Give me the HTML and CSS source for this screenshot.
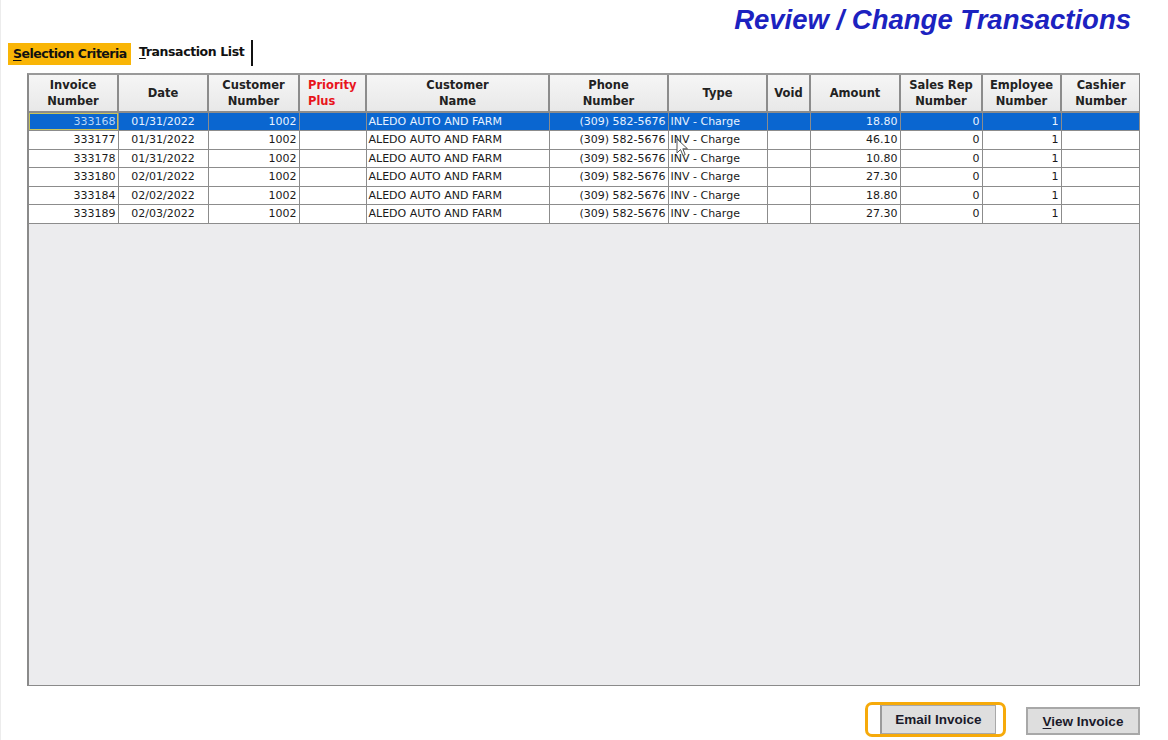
FILE: index.html
```html
<!DOCTYPE html>
<html>
<head>
<meta charset="utf-8">
<link rel="stylesheet" href="styles.css">
</head>
<body>
<div class="app">
  <div class="title-row"><h1 class="title">Review / Change Transactions</h1></div>
  <div class="tabs">
    <div class="tab tab-active"><u>S</u>election Criteria</div>
    <div class="tab tab-plain"><u>T</u>ransaction List</div>
  </div>
  <div class="grid">
    <table class="tbl">
      <colgroup>
        <col style="width:89px"><col style="width:90px"><col style="width:91px"><col style="width:67px">
        <col style="width:183px"><col style="width:119px"><col style="width:99px"><col style="width:43px">
        <col style="width:90px"><col style="width:82px"><col style="width:79px"><col style="width:80px">
      </colgroup>
      <thead>
        <tr>
          <th>Invoice<br>Number</th>
          <th>Date</th>
          <th>Customer<br>Number</th>
          <th class="th-red">Priority<br>Plus</th>
          <th>Customer<br>Name</th>
          <th>Phone<br>Number</th>
          <th>Type</th>
          <th>Void</th>
          <th>Amount</th>
          <th>Sales Rep<br>Number</th>
          <th>Employee<br>Number</th>
          <th>Cashier<br>Number</th>
        </tr>
      </thead>
      <tbody>
        <tr class="sel">
          <td class="r focus">333168</td><td class="c">01/31/2022</td><td class="r">1002</td><td></td>
          <td class="l">ALEDO AUTO AND FARM</td><td class="r">(309) 582-5676</td><td class="l">INV - Charge</td><td></td>
          <td class="r">18.80</td><td class="r">0</td><td class="r">1</td><td></td>
        </tr>
        <tr>
          <td class="r">333177</td><td class="c">01/31/2022</td><td class="r">1002</td><td></td>
          <td class="l">ALEDO AUTO AND FARM</td><td class="r">(309) 582-5676</td><td class="l">INV - Charge</td><td></td>
          <td class="r">46.10</td><td class="r">0</td><td class="r">1</td><td></td>
        </tr>
        <tr>
          <td class="r">333178</td><td class="c">01/31/2022</td><td class="r">1002</td><td></td>
          <td class="l">ALEDO AUTO AND FARM</td><td class="r">(309) 582-5676</td><td class="l">INV - Charge</td><td></td>
          <td class="r">10.80</td><td class="r">0</td><td class="r">1</td><td></td>
        </tr>
        <tr>
          <td class="r">333180</td><td class="c">02/01/2022</td><td class="r">1002</td><td></td>
          <td class="l">ALEDO AUTO AND FARM</td><td class="r">(309) 582-5676</td><td class="l">INV - Charge</td><td></td>
          <td class="r">27.30</td><td class="r">0</td><td class="r">1</td><td></td>
        </tr>
        <tr>
          <td class="r">333184</td><td class="c">02/02/2022</td><td class="r">1002</td><td></td>
          <td class="l">ALEDO AUTO AND FARM</td><td class="r">(309) 582-5676</td><td class="l">INV - Charge</td><td></td>
          <td class="r">18.80</td><td class="r">0</td><td class="r">1</td><td></td>
        </tr>
        <tr>
          <td class="r">333189</td><td class="c">02/03/2022</td><td class="r">1002</td><td></td>
          <td class="l">ALEDO AUTO AND FARM</td><td class="r">(309) 582-5676</td><td class="l">INV - Charge</td><td></td>
          <td class="r">27.30</td><td class="r">0</td><td class="r">1</td><td></td>
        </tr>
      </tbody>
    </table>
    <svg class="cursor" width="14" height="20" viewBox="0 0 14 20">
      <path d="M1 1 L1 15 L4.5 11.5 L7 17.5 L9.2 16.6 L6.8 10.8 L11.5 10.8 Z" fill="#fff" stroke="#555" stroke-width="1"/>
    </svg>
  </div>
  <div class="actions">
    <div class="focus-ring"><button class="btn">Email Invoice</button></div>
    <button class="btn btn-view"><u>V</u>iew Invoice</button>
  </div>
</div>
</body>
</html>
```

FILE: styles.css
```css
* { box-sizing: border-box; }
html, body { margin: 0; padding: 0; background: #fff; }
body { width: 1168px; height: 740px; overflow: hidden; font-family: "DejaVu Sans", sans-serif; }

.app {
  position: relative;
  width: 1168px;
  height: 740px;
  border-left: 1px solid #ececec;
  display: flex;
  flex-direction: column;
}

.title-row {
  height: 40px;
  display: flex;
  justify-content: flex-end;
  padding-right: 37px;
}
.title {
  margin: 0;
  padding-top: 4px;
  font-family: "Liberation Sans", Arial, sans-serif;
  font-weight: bold;
  font-style: italic;
  font-size: 27.5px;
  line-height: 32px;
  color: #1c22c0;
}

.tabs {
  height: 33px;
  display: flex;
  align-items: flex-start;
  padding-left: 7px;
}
.tab {
  font-weight: bold;
  font-size: 12.5px;
  color: #111;
  height: 22px;
  line-height: 22px;
  margin-top: 3px;
}
.tab u { text-decoration-thickness: 1px; text-underline-offset: 2px; }
.tab-active {
  background: #f9b506;
  width: 123px;
  padding-left: 5px;
  letter-spacing: -0.5px;
}
.tab-plain {
  margin-top: 0;
  height: 26px;
  line-height: 24px;
  padding-left: 8px;
  padding-right: 7px;
  border-right: 2px solid #111;
  letter-spacing: -0.4px;
}

.grid {
  position: relative;
  margin-left: 26px;
  width: 1113px;
  height: 613px;
  background: #ececee;
  border: 1px solid #8a8a8a;
  border-left: 2px solid #8a8a8a;
  border-top: 2px solid #9a9a9a;
  overflow: hidden;
}

.tbl {
  border-collapse: collapse;
  table-layout: fixed;
  width: 1112px;
  font-size: 11px;
  color: #1a1a1a;
}
.tbl th {
  height: 37px;
  background: linear-gradient(#f6f6f6, #e8e8e8);
  border-right: 2px solid #8c8c8c;
  border-bottom: 2px solid #8c8c8c;
  font-weight: bold;
  font-size: 11.5px;
  line-height: 16px;
  color: #222;
  text-align: center;
  vertical-align: middle;
  padding: 0;
}
.tbl th.th-red { color: #e8141c; text-align: left; padding-left: 8px; }
.tbl td {
  height: 18.5px;
  padding: 0 2px;
  background: #fff;
  border-right: 1px solid #8c8c8c;
  border-bottom: 1px solid #8c8c8c;
  white-space: nowrap;
  overflow: hidden;
  line-height: 17px;
}
.tbl td.r { text-align: right; }
.tbl td.c { text-align: center; }
.tbl td.l { text-align: left; }

.tbl tr.sel td {
  background: #0a66d0;
  color: #e8f2ff;
}
.tbl tr.sel td.focus {
  box-shadow: inset 0 0 0 1px #c8c45a;
  color: #b8d6f8;
}

.cursor {
  position: absolute;
  left: 647px;
  top: 63px;
}

.actions {
  margin-top: 16px;
  display: flex;
  justify-content: flex-end;
  align-items: center;
  padding-right: 28px;
  gap: 20px;
}
.focus-ring {
  width: 141px;
  height: 35px;
  border: 3px solid #f6aa0a;
  border-radius: 7px;
  padding-left: 12px;
  display: flex;
  align-items: center;
}
.btn {
  font-family: "Liberation Sans", Arial, sans-serif;
  font-weight: bold;
  font-size: 13.5px;
  color: #1a1a2a;
  background: #dedede;
  border: 1px solid #a8a8a8;
  border-left: 2px solid #9a9a9a;
  width: 116px;
  height: 29px;
  padding: 0;
  border-radius: 0;
}
.btn-view {
  width: 114px;
  height: 28px;
  border: 2px solid #a8a8a8;
  margin-top: 3px;
}
.btn u { text-underline-offset: 2px; }
```
